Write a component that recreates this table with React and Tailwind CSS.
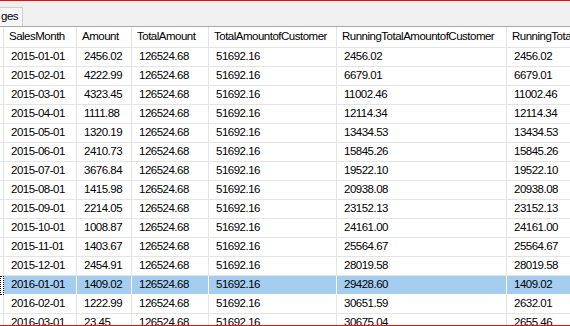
import React from 'react';

const cols = ['SalesMonth', 'Amount', 'TotalAmount', 'TotalAmountofCustomer', 'RunningTotalAmountofCustomer', 'RunningTotalAmount'];

const rows = [
  ['2015-01-01', '2456.02', '126524.68', '51692.16', '2456.02', '2456.02'],
  ['2015-02-01', '4222.99', '126524.68', '51692.16', '6679.01', '6679.01'],
  ['2015-03-01', '4323.45', '126524.68', '51692.16', '11002.46', '11002.46'],
  ['2015-04-01', '1111.88', '126524.68', '51692.16', '12114.34', '12114.34'],
  ['2015-05-01', '1320.19', '126524.68', '51692.16', '13434.53', '13434.53'],
  ['2015-06-01', '2410.73', '126524.68', '51692.16', '15845.26', '15845.26'],
  ['2015-07-01', '3676.84', '126524.68', '51692.16', '19522.10', '19522.10'],
  ['2015-08-01', '1415.98', '126524.68', '51692.16', '20938.08', '20938.08'],
  ['2015-09-01', '2214.05', '126524.68', '51692.16', '23152.13', '23152.13'],
  ['2015-10-01', '1008.87', '126524.68', '51692.16', '24161.00', '24161.00'],
  ['2015-11-01', '1403.67', '126524.68', '51692.16', '25564.67', '25564.67'],
  ['2015-12-01', '2454.91', '126524.68', '51692.16', '28019.58', '28019.58'],
  ['2016-01-01', '1409.02', '126524.68', '51692.16', '29428.60', '1409.02'],
  ['2016-02-01', '1222.99', '126524.68', '51692.16', '30651.59', '2632.01'],
  ['2016-03-01', '23.45', '126524.68', '51692.16', '30675.04', '2655.46'],
];

// selected row in the results grid
const SEL = 12;

export default function App() {
  return (
    <div
      className="w-[570px] h-[326px] overflow-hidden bg-white flex flex-col text-[11.5px] tracking-[-0.5px] text-black"
      style={{ fontFamily: '"Liberation Sans", Arial, sans-serif' }}
    >
      <div className="h-px bg-[#e81010] shrink-0" />

      {/* tab strip */}
      <div className="h-[25px] shrink-0 bg-[#f0f0f0] flex items-end">
        <div className="h-[19px] -ml-px pl-px pr-[4px] border border-b-0 border-[#cfcfcf] bg-[#f7f7f7] flex items-center">
          ges
        </div>
      </div>
      <div className="h-px bg-[#a9a9a9] shrink-0" />

      {/* results grid */}
      <div className="flex-1 overflow-hidden">
        <div className="grid grid-cols-[4px_73px_55px_77px_128px_170px_100px] w-max">
          <div className="h-[21px] border-r border-b border-[#e4e4e4]" />
          {cols.map((c) => (
            <div
              key={c}
              className="h-[21px] border-r border-b border-[#e4e4e4] pl-[5px] flex items-center whitespace-nowrap overflow-hidden"
            >
              {c}
            </div>
          ))}

          {rows.map((r, i) => {
            const sel = i === SEL;
            return (
              <React.Fragment key={i}>
                <div
                  className={
                    sel
                      ? 'h-[19px] border border-dotted border-black'
                      : 'h-[19px] border-r border-b border-[#e4e4e4]'
                  }
                />
                {r.map((v, j) => (
                  <div
                    key={j}
                    className={
                      'h-[19px] border-r border-b pl-[7px] flex items-center whitespace-nowrap overflow-hidden ' +
                      (sel ? 'bg-[#a4cdf0] border-white' : 'border-[#e4e4e4]')
                    }
                  >
                    {v}
                  </div>
                ))}
              </React.Fragment>
            );
          })}
        </div>
      </div>

      <div className="h-px bg-[#e81010] shrink-0" />
    </div>
  );
}
